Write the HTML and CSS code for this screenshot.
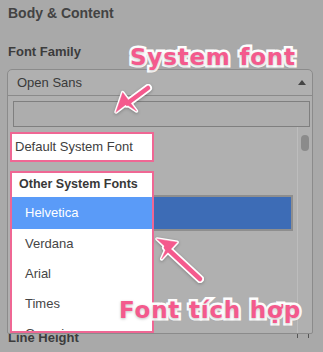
FILE: index.html
```html
<!DOCTYPE html>
<html lang="vi">
<head>
<meta charset="utf-8">
<title>Body &amp; Content</title>
<link rel="stylesheet" href="styles.css">
</head>
<body>
<div class="page">
  <h2 class="section-title">Body &amp; Content</h2>
  <div class="field-label">Font Family</div>
  <div class="select">
    <div class="select-head"><span class="select-value">Open Sans</span><span class="caret"></span></div>
    <div class="select-body">
      <div class="search"></div>
      <div class="list">
        <div class="list-main">
          <div class="spot spot-default">Default System Font</div>
          <div class="group">
            <div class="spot spot-group">
              <div class="group-title">Other System Fonts</div>
              <div class="opt opt-active">Helvetica</div>
              <div class="opt">Verdana</div>
              <div class="opt">Arial</div>
              <div class="opt">Times</div>
              <div class="opt">Georgia</div>
            </div>
            <div class="dim-col"><div class="dim-active"></div></div>
          </div>
        </div>
        <div class="scrollbar"><div class="thumb"></div></div>
      </div>
    </div>
  </div>
  <div class="line-height">
    <span class="field-label-inline">Line Height</span>
    <svg class="lh-icon" width="14" height="8" viewBox="0 0 14 8"><path d="M0.5 0 V5 M11.5 0 V5" stroke="#555" stroke-width="1" fill="none"/></svg>
  </div>

  <div class="note note-system">System font</div>
  <div class="note note-builtin">Font tích hợp</div>
  <svg class="arrows" width="323" height="352" viewBox="0 0 323 352">
    <g class="arrow-outline" fill="#fff" stroke="#fff" stroke-width="3.5" stroke-linejoin="round" stroke-linecap="round">
      <line x1="148" y1="88" x2="127" y2="103.5" stroke-width="8"/>
      <polygon points="116,112 122.7,92.6 136.5,111 126.4,104.2"/>
      <line x1="200" y1="279" x2="166" y2="247.5" stroke-width="8"/>
      <polygon points="157,239 177.2,242.2 161.6,259 166.5,247.9"/>
    </g>
    <g fill="#f45a8d" stroke="#f45a8d" stroke-linejoin="round" stroke-linecap="round">
      <line x1="148" y1="88" x2="127" y2="103.5" stroke-width="4.5"/>
      <polygon points="116,112 122.7,92.6 136.5,111 126.4,104.2" stroke-width="0.5"/>
      <line x1="200" y1="279" x2="166" y2="247.5" stroke-width="4.5"/>
      <polygon points="157,239 177.2,242.2 161.6,259 166.5,247.9" stroke-width="0.5"/>
    </g>
  </svg>
</div>
</body>
</html>
```

FILE: styles.css
```css
html, body {
  margin: 0;
  padding: 0;
  background: #a9a9a9;
}

.page {
  position: relative;
  width: 323px;
  height: 352px;
  overflow: hidden;
  padding: 5px 10px 0 7px;
  box-sizing: border-box;
  font-family: "Liberation Sans", Arial, sans-serif;
  color: #3e3e3e;
}

.section-title {
  margin: 0;
  padding-left: 1px;
  font-size: 14px;
  line-height: 17px;
  font-weight: bold;
  color: #434343;
}

.field-label {
  margin-top: 22px;
  padding-left: 1px;
  font-size: 13px;
  line-height: 16px;
  font-weight: bold;
  color: #3c3c3c;
}

.select {
  position: relative;
  z-index: 2;
  margin-top: 9px;
  width: 306px;
  box-sizing: border-box;
  border: 1px solid #8b8b8b;
  border-radius: 5px 5px 2px 2px;
  background: #b0b0b0;
}

.select-head {
  height: 25px;
  display: flex;
  align-items: center;
  justify-content: space-between;
  padding: 0 6px 0 9px;
  border-bottom: 1px solid #8a8a8a;
  font-size: 13px;
  color: #3a3a3a;
}

.caret {
  width: 0;
  height: 0;
  border-left: 4px solid transparent;
  border-right: 4px solid transparent;
  border-bottom: 5px solid #454545;
  margin-bottom: 1px;
}

.select-body {
  height: 237px;
  display: flex;
  flex-direction: column;
}

.search {
  margin: 5px 2px 0 5px;
  height: 27px;
  box-sizing: border-box;
  border: 1px solid #7f7f7f;
  background: #adadad;
}

.list {
  flex: 1;
  display: flex;
}

.list-main {
  flex: 1;
  display: flex;
  flex-direction: column;
}

.spot {
  position: relative;
  z-index: 3;
  background: #fff;
  border: 2px solid #ef6794;
  width: 144px;
  box-sizing: border-box;
  margin-left: 2px;
}

.spot-default {
  margin-top: 5px;
  height: 30px;
  padding-left: 3px;
  font-size: 13px;
  line-height: 26px;
  color: #404040;
  white-space: nowrap;
}

.group {
  margin-top: 9px;
  flex: 1;
  display: flex;
  min-height: 0;
}

.spot-group {
  height: 162px;
  overflow: hidden;
  flex: none;
}

.group-title {
  height: 24px;
  box-sizing: border-box;
  padding: 1px 0 3px 7px;
  font-size: 12.5px;
  line-height: 20px;
  font-weight: bold;
  color: #383838;
  white-space: nowrap;
}

.opt {
  height: 30px;
  padding-left: 13px;
  font-size: 13px;
  line-height: 30px;
  color: #454545;
}

.opt-active {
  height: 32px;
  line-height: 32px;
  background: #5a9bf8;
  color: #fff;
}

.dim-col {
  flex: 1;
  padding-top: 26px;
  padding-right: 6px;
}

.dim-active {
  height: 32px;
  background: #3d6cb6;
  box-shadow: 0 0 0 2px #8e8e8e;
}

.scrollbar {
  width: 14px;
  border-left: 1px solid #bdbdbd;
  padding-top: 8px;
  display: flex;
  justify-content: center;
}

.thumb {
  width: 8px;
  height: 16px;
  border-radius: 4px;
  background: #8b8b8b;
}

.line-height {
  position: relative;
  z-index: 1;
  margin-top: -4px;
  display: flex;
  align-items: flex-start;
  justify-content: space-between;
  width: 306px;
}

.field-label-inline {
  padding-left: 1px;
  font-size: 13px;
  line-height: 16px;
  font-weight: bold;
  color: #3c3c3c;
}

.lh-icon {
  margin-top: 3px;
  margin-right: 2px;
}

.note {
  position: absolute;
  z-index: 5;
  font-family: "DejaVu Sans", sans-serif;
  font-weight: bold;
  font-size: 23px;
  line-height: 1;
  letter-spacing: 0.8px;
  color: #f45a8d;
  -webkit-text-stroke: 5px #fff;
  paint-order: stroke fill;
  text-shadow: 0 1px 3px rgba(0, 0, 0, 0.25);
  white-space: nowrap;
}

.note-system {
  left: 130px;
  top: 46px;
}

.note-builtin {
  left: 119px;
  top: 299px;
}

.arrows {
  position: absolute;
  z-index: 6;
  left: 0;
  top: 0;
  pointer-events: none;
  filter: drop-shadow(0 1px 1.5px rgba(0, 0, 0, 0.25));
}
```
